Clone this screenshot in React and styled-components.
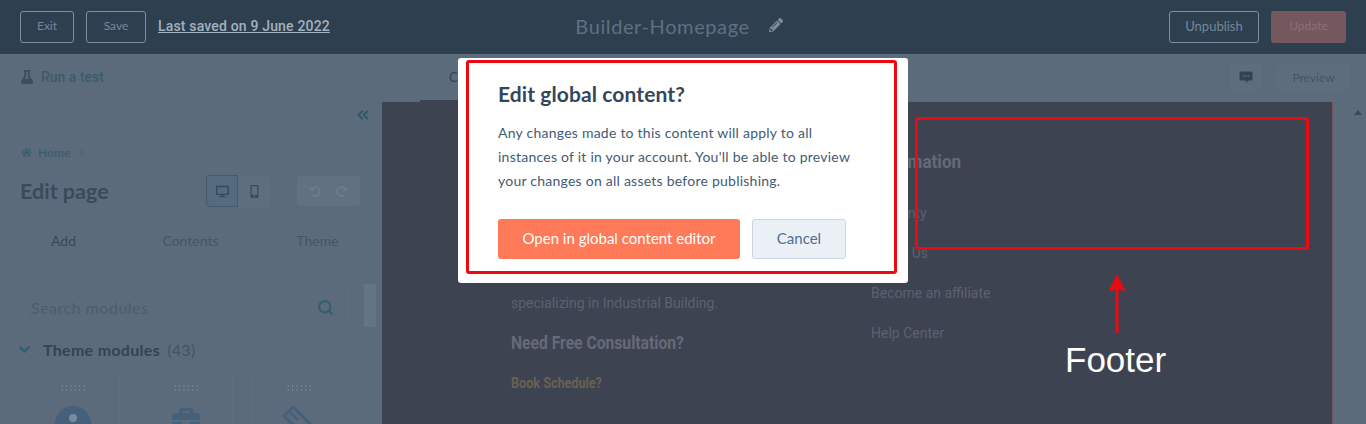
import React from 'react'
import styled, { createGlobalStyle } from 'styled-components';
import { FaPencilAlt, FaHome, FaDesktop, FaMobileAlt, FaBriefcase, FaUndoAlt, FaRedoAlt, FaFlask } from 'react-icons/fa';
import { LuChevronsLeft, LuChevronDown, LuChevronRight, LuSearch } from 'react-icons/lu';

const GlobalStyle = createGlobalStyle`
  html, body {
    margin: 0;
    padding: 0;
    height: 424px;
    overflow: hidden;
    background: #5c6b7b;
    font-family: Lato, "Open Sans", sans-serif;
  }
`;

const Page = styled.div`
  position: relative;
  display: flex;
  flex-direction: column;
  width: 1366px;
  height: 424px;
  overflow: hidden;
`;

const TopBar = styled.header`
  display: grid;
  grid-template-columns: 1fr auto 1fr;
  align-items: center;
  flex: 0 0 54px;
  height: 54px;
  padding: 0 20px;
  box-sizing: border-box;
  background: #2e3f50;
`;

const TopGroup = styled.div`
  display: flex;
  align-items: center;
  gap: 12px;
  justify-content: ${(p) => (p.$end ? 'flex-end' : 'flex-start')};
`;

const GhostButton = styled.div`
  display: flex;
  align-items: center;
  justify-content: center;
  box-sizing: border-box;
  width: ${(p) => p.$w}px;
  height: 32px;
  padding-bottom: 3px;
  border: 1px solid #7e90a1;
  border-radius: 3px;
  font-size: ${(p) => p.$size || 12}px;
  color: #75889a;
`;

const UpdateButton = styled.div`
  display: flex;
  align-items: center;
  justify-content: center;
  box-sizing: border-box;
  width: 75px;
  height: 32px;
  padding-bottom: 3px;
  border-radius: 3px;
  background: #74585e;
  font-size: 12px;
  color: #8c7074;
`;

const LastSaved = styled.span`
  margin-top: -3px;
  font-family: Roboto, sans-serif;
  font-size: 14px;
  font-weight: 500;
  letter-spacing: 0.17px;
  color: #a4b1be;
  text-decoration: underline;
`;

const PageTitle = styled.div`
  display: flex;
  align-items: center;
  gap: 19px;
  margin: -2px 8px 0 0;
  font-size: 20px;
  letter-spacing: 0.6px;
  color: #5f7081;
  svg {
    width: 14px;
    height: 14px;
    margin-top: -3px;
    color: #7f8e9c;
  }
`;

const SubBar = styled.div`
  display: flex;
  align-items: center;
  flex: 0 0 48px;
  height: 48px;
  box-sizing: border-box;
  padding: 0 16px 2px 20px;
  background: #5c6b7b;
`;

const RunTest = styled.div`
  display: flex;
  align-items: center;
  gap: 7px;
  width: 400px;
  font-family: Roboto, sans-serif;
  font-size: 14px;
  font-weight: 500;
  color: #3a5c6a;
  svg {
    width: 14px;
    height: 14px;
    color: #3f4d59;
  }
`;

const CenterTab = styled.div`
  display: flex;
  align-items: center;
  align-self: stretch;
  box-sizing: border-box;
  width: 80px;
  height: 48px;
  margin-bottom: -2px;
  padding-left: 29px;
  border-bottom: 2px solid #3e4352;
  font-size: 13px;
  color: #34434f;
`;

const CommentButton = styled.div`
  display: flex;
  align-items: center;
  justify-content: center;
  width: 32px;
  height: 28px;
  margin-left: auto;
  margin-right: 15px;
  border-radius: 3px;
  background: #5e6d7d;
`;

const PreviewButton = styled.div`
  display: flex;
  align-items: center;
  justify-content: center;
  width: 73px;
  height: 28px;
  border-radius: 3px;
  background: #5e6d7d;
  font-size: 12px;
  color: #46535f;
`;

const Body = styled.div`
  display: flex;
  flex: 1;
  min-height: 0;
`;

const Sidebar = styled.aside`
  display: flex;
  flex-direction: column;
  flex: 0 0 380px;
  box-sizing: border-box;
  background: #5c6b7b;
  > * { flex: none; }
`;

const CollapseRow = styled.div`
  display: flex;
  justify-content: flex-end;
  padding: 4px 9px 0 0;
  height: 18px;
  color: #2c586a;
`;

const Crumbs = styled.div`
  display: flex;
  align-items: center;
  gap: 6px;
  margin: 18px 0 0 21px;
  height: 20px;
  font-size: 12px;
  font-weight: 700;
  color: #3a6070;
  svg { width: 11px; height: 11px; }
`;

const TitleRow = styled.div`
  display: flex;
  align-items: center;
  margin: 13px 20px 0;
  height: 32px;
`;

const EditTitle = styled.h2`
  flex: 0 0 186px;
  margin: 0;
  font-size: 21.5px;
  font-weight: 700;
  color: #3a4a5a;
`;

const Toggle = styled.div`
  display: flex;
  align-items: center;
  justify-content: center;
  width: 32px;
  height: 32px;
  box-sizing: border-box;
  background: ${(p) => (p.$on ? '#546a7e' : '#5f6e7e')};
  border: 1px solid ${(p) => (p.$on ? '#465a6c' : 'transparent')};
  border-radius: ${(p) => (p.$on ? '3px 0 0 3px' : '0 3px 3px 0')};
  color: #3a4956;
  svg { width: 13px; height: 13px; }
`;

const UndoGroup = styled.div`
  display: flex;
  align-items: center;
  justify-content: center;
  gap: 15px;
  width: 63px;
  height: 30px;
  margin-left: 27px;
  border-radius: 3px;
  background: #627181;
  color: #6e7c8b;
  svg { width: 11px; height: 11px; }
`;

const Tabs = styled.div`
  display: grid;
  grid-template-columns: repeat(3, 127px);
  margin-top: 10px;
  height: 48px;
`;

const TabItem = styled.div`
  display: flex;
  align-items: center;
  justify-content: center;
  font-size: 14px;
  color: ${(p) => (p.$on ? '#3a4856' : '#465564')};
  border-bottom: 1px solid #586878;
`;

const SearchRow = styled.div`
  display: flex;
  align-items: center;
  margin-top: 21px;
  height: 42px;
`;

const SearchBox = styled.div`
  display: flex;
  align-items: center;
  justify-content: space-between;
  box-sizing: border-box;
  width: 323px;
  height: 40px;
  margin-left: 25px;
  padding: 0 13px 0 5px;
  border: 1px solid #5f6e7e;
  font-size: 16px;
  letter-spacing: 0.5px;
  color: #4d5c6b;
  svg { width: 17px; height: 17px; color: #2f5f70; }
`;

const Scroll = styled.div`
  width: 12px;
  height: 43px;
  margin: -3px 0 0 16px;
  background: #657482;
`;

const SectionRow = styled.div`
  display: flex;
  align-items: center;
  margin: 10px 0 0 16px;
  height: 22px;
  font-size: 16px;
  font-weight: 700;
  letter-spacing: 0.3px;
  white-space: pre;
  color: #35434f;
  svg { width: 17px; height: 17px; margin-right: 10px; color: #2f5f70; }
  span {
    margin-left: 3px;
    font-weight: 400;
    color: #45535f;
  }
`;

const Cards = styled.div`
  display: grid;
  grid-template-columns: repeat(3, 95px);
  column-gap: 18px;
  margin: 13px 0 0 25px;
`;

const Card = styled.div`
  display: flex;
  flex-direction: column;
  align-items: center;
  gap: 14px;
  height: 80px;
  box-sizing: border-box;
  padding-top: 10px;
  border: 1px solid #5f6e7e;
  color: #45607a;
  svg { flex: none; }
`;

const Grip = styled.div`
  width: 26px;
  height: 8px;
  background-image: radial-gradient(#7b8998 1px, transparent 1px);
  background-size: 4.4px 4px;
`;

const Canvas = styled.main`
  display: grid;
  grid-template-columns: 360px 1fr;
  flex: 0 0 952px;
  box-sizing: border-box;
  padding-left: 129px;
  background: #3e4352;
  border-left: 1px solid #8b565c;
  border-right: 1px solid #75565f;
  overflow: hidden;
`;

const FooterCol = styled.div`
  display: flex;
  flex-direction: column;
  padding-top: ${(p) => p.$top}px;
`;

const FooterHead = styled.div`
  height: ${(p) => p.$h || 40}px;
  font-family: Roboto, sans-serif;
  font-size: 18px;
  font-weight: 700;
  line-height: 20px;
  white-space: nowrap;
  color: #666a78;
  transform: scaleX(${(p) => p.$scale || 0.87});
  transform-origin: left center;
`;

const FooterText = styled.div`
  height: 40px;
  font-family: Roboto, sans-serif;
  font-size: 14px;
  line-height: 20px;
  color: #5c6170;
`;

const FooterLink = styled.div`
  height: 50px;
  font-family: Roboto, sans-serif;
  font-size: 14px;
  font-weight: 700;
  line-height: 20px;
  white-space: nowrap;
  color: #6a6050;
  transform: scaleX(0.9);
  transform-origin: left center;
`;

const RightStrip = styled.div`
  position: relative;
  flex: 1;
  background: #5c6b7b;
  &::before {
    content: '';
    position: absolute;
    top: 8px;
    left: 21px;
    border: 4px solid transparent;
    border-top: 0;
    border-bottom: 5px solid #3d4a57;
  }
`;

const Modal = styled.section`
  position: absolute;
  top: 58px;
  left: 458px;
  width: 450px;
  height: 225px;
  box-sizing: border-box;
  padding: 23px 40px 0;
  background: #fff;
  border-radius: 3px;
`;

const ModalTitle = styled.h1`
  margin: 0;
  font-size: 21px;
  line-height: 26px;
  font-weight: 700;
  letter-spacing: 0.1px;
  color: #33475b;
`;

const ModalText = styled.p`
  margin: 14px 0 0;
  font-size: 14px;
  line-height: 24px;
  letter-spacing: 0.24px;
  color: #425b76;
`;

const ModalActions = styled.div`
  display: flex;
  gap: 12px;
  margin-top: 26px;
`;

const PrimaryButton = styled.div`
  display: flex;
  align-items: center;
  justify-content: center;
  box-sizing: border-box;
  width: 242px;
  height: 40px;
  padding-bottom: 2px;
  border-radius: 3px;
  background: #ff7a59;
  font-size: 15px;
  color: #fff;
`;

const CancelButton = styled.div`
  display: flex;
  align-items: center;
  justify-content: center;
  box-sizing: border-box;
  width: 94px;
  height: 40px;
  padding-bottom: 2px;
  border: 1px solid #cbd6e2;
  border-radius: 3px;
  background: #eaf0f6;
  font-size: 15px;
  color: #506e91;
`;

const RedFrame = styled.div`
  position: absolute;
  box-sizing: border-box;
  top: ${(p) => p.$top}px;
  left: ${(p) => p.$left}px;
  width: ${(p) => p.$w}px;
  height: ${(p) => p.$h}px;
  border: 3px solid #ec0a12;
  border-radius: 3px;
`;

const Arrow = styled.svg`
  position: absolute;
  top: 273px;
  left: 1107px;
`;

const FooterLabel = styled.div`
  position: absolute;
  top: 339px;
  left: 1065px;
  font-family: "Liberation Sans", Arial, sans-serif;
  font-size: 35px;
  line-height: 42px;
  color: #fff;
`;

const App = () => {
  return (
    <Page>
      <GlobalStyle />
      <TopBar>
        <TopGroup>
          <GhostButton $w={54}>Exit</GhostButton>
          <GhostButton $w={60}>Save</GhostButton>
          <LastSaved>Last saved on 9 June 2022</LastSaved>
        </TopGroup>
        <PageTitle>
          Builder-Homepage
          <FaPencilAlt />
        </PageTitle>
        <TopGroup $end>
          <GhostButton $w={90} $size={13}>Unpublish</GhostButton>
          <UpdateButton>Update</UpdateButton>
        </TopGroup>
      </TopBar>
      <SubBar>
        <RunTest>
          <FaFlask />
          Run a test
        </RunTest>
        <CenterTab>Content</CenterTab>
        <CommentButton>
          <svg width="14" height="13" viewBox="0 0 14 13">
            <path d="M2 0.5 H12 A1.5 1.5 0 0 1 13.5 2 V8 A1.5 1.5 0 0 1 12 9.5 H9 L7 12.5 V9.5 H2 A1.5 1.5 0 0 1 0.5 8 V2 A1.5 1.5 0 0 1 2 0.5 Z" fill="#34434f" />
            <path d="M4 5 H10" stroke="#5e6d7d" strokeWidth="1.4" strokeDasharray="1.4 1" />
          </svg>
        </CommentButton>
        <PreviewButton>Preview</PreviewButton>
      </SubBar>
      <Body>
        <Sidebar>
          <CollapseRow><LuChevronsLeft size={18} strokeWidth={2.6} /></CollapseRow>
          <Crumbs>
            <FaHome />
            Home
            <LuChevronRight />
          </Crumbs>
          <TitleRow>
            <EditTitle>Edit page</EditTitle>
            <Toggle $on><FaDesktop /></Toggle>
            <Toggle><FaMobileAlt /></Toggle>
            <UndoGroup>
              <FaUndoAlt />
              <FaRedoAlt />
            </UndoGroup>
          </TitleRow>
          <Tabs>
            <TabItem $on>Add</TabItem>
            <TabItem>Contents</TabItem>
            <TabItem>Theme</TabItem>
          </Tabs>
          <SearchRow>
            <SearchBox>
              Search modules
              <LuSearch strokeWidth={3} />
            </SearchBox>
            <Scroll />
          </SearchRow>
          <SectionRow>
            <LuChevronDown strokeWidth={3} />
            Theme modules <span>(43)</span>
          </SectionRow>
          <Cards>
            <Card>
              <Grip />
              <svg width="36" height="36" viewBox="0 0 36 36">
                <circle cx="18" cy="18" r="18" fill="#45607a" />
                <circle cx="18" cy="12" r="4" fill="#7b8a98" />
                <path d="M13 19 H23 V28 H13 Z" fill="#7b8a98" />
              </svg>
            </Card>
            <Card>
              <Grip />
              <FaBriefcase size={28} />
            </Card>
            <Card>
              <Grip />
              <svg width="34" height="34" viewBox="0 0 34 34">
                <path d="M11 1 L2 10 L24 32 L33 23 Z M7 5 L16 14" fill="none" stroke="#45607a" strokeWidth="3" />
              </svg>
            </Card>
          </Cards>
        </Sidebar>
        <Canvas>
          <FooterCol $top={191}>
            <FooterText>specializing in Industrial Building.</FooterText>
            <FooterHead>Need Free Consultation?</FooterHead>
            <FooterLink>Book Schedule?</FooterLink>
            <FooterHead>Follow Us</FooterHead>
          </FooterCol>
          <FooterCol $top={50}>
            <FooterHead $h={51} $scale={0.95}>Information</FooterHead>
            <FooterText>Warranty</FooterText>
            <FooterText>About Us</FooterText>
            <FooterText>Become an affiliate</FooterText>
            <FooterText>Help Center</FooterText>
          </FooterCol>
        </Canvas>
        <RightStrip />
      </Body>
      <Modal>
        <ModalTitle>Edit global content?</ModalTitle>
        <ModalText>
          Any changes made to this content will apply to all<br />
          instances of it in your account. You'll be able to preview<br />
          your changes on all assets before publishing.
        </ModalText>
        <ModalActions>
          <PrimaryButton>Open in global content editor</PrimaryButton>
          <CancelButton>Cancel</CancelButton>
        </ModalActions>
      </Modal>
      <RedFrame $top={60} $left={466} $w={431} $h={214} />
      <RedFrame $top={117} $left={915} $w={394} $h={133} />
      <Arrow width="20" height="62" viewBox="0 0 20 62">
        <path d="M10 1 L19 19 L11.5 16 V60 H8.5 V16 L1 19 Z" fill="#ec0a12" />
      </Arrow>
      <FooterLabel>Footer</FooterLabel>
    </Page>
  )
}

export default App
